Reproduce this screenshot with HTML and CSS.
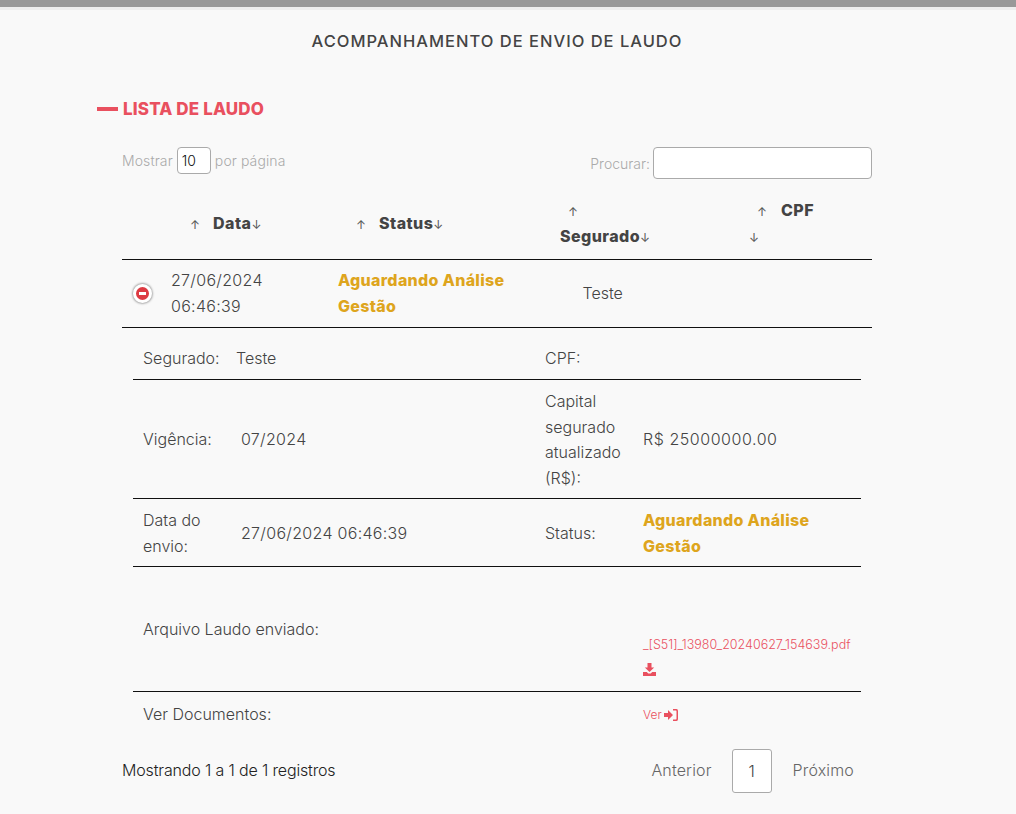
FILE: index.html
```html
<!DOCTYPE html>
<html lang="en">

<head>
    <meta charset="UTF-8">
    <meta name="viewport" content="width=device-width, initial-scale=1.0">
    <title>Acompanhamento de envio de laudo</title>
    <link rel="stylesheet" href="styles.css">
</head>

<body>
    <div class="topbar"></div>
    <h1 class="page-title">ACOMPANHAMENTO DE ENVIO DE LAUDO</h1>

    <div class="content">
        <h2 class="section-title"><span class="dash"></span>LISTA DE LAUDO</h2>

        <div class="list">
            <div class="controls">
                <label class="length">Mostrar <input class="length-input" type="text" value="10"> por página</label>
                <label class="search"><span class="search-label">Procurar:</span> <input class="search-input" type="text"></label>
            </div>

            <table class="laudos">
                <colgroup>
                    <col class="col-toggle">
                    <col class="col-data">
                    <col class="col-status">
                    <col class="col-segurado">
                    <col class="col-cpf">
                </colgroup>
                <thead>
                    <tr>
                        <th></th>
                        <th class="th-data"><span class="arrow up">↑</span>Data<span class="arrow">↓</span></th>
                        <th class="th-status"><span class="arrow up">↑</span>Status<span class="arrow">↓</span></th>
                        <th class="th-segurado"><span class="arrow">↑</span><br>Segurado<span class="arrow">↓</span></th>
                        <th class="th-cpf"><span class="arrow up first">↑</span>CPF<br><span class="arrow">↓</span></th>
                    </tr>
                </thead>
                <tbody>
                    <tr>
                        <td><span class="toggle"></span></td>
                        <td class="nums">27/06/2024 06:46:39</td>
                        <td class="status">Aguardando Análise Gestão</td>
                        <td class="td-segurado">Teste</td>
                        <td></td>
                    </tr>
                </tbody>
            </table>

            <div class="details">
                <div class="row row-first">
                    <div>Segurado:</div>
                    <div>Teste</div>
                    <div>CPF:</div>
                    <div></div>
                </div>
                <div class="row row-capital">
                    <div>Vigência:</div>
                    <div class="nums">07/2024</div>
                    <div>Capital segurado atualizado (R$):</div>
                    <div class="money">R$ 25000000.00</div>
                </div>
                <div class="row row-envio">
                    <div>Data do envio:</div>
                    <div class="nums">27/06/2024 06:46:39</div>
                    <div>Status:</div>
                    <div class="status">Aguardando Análise Gestão</div>
                </div>
                <div class="row row-file">
                    <div>Arquivo Laudo enviado:</div>
                    <div class="file">
                        <a href="#">_[S51]_13980_20240627_154639.pdf</a>
                        <a href="#" class="file-icon">
                            <svg width="13" height="13" viewBox="0 0 13 13"><path fill="#e9505f" d="M4.500 0h4v4.500h2.700L6.500 9 1.800 4.500h2.700zM0 9h3.800l1.500 1.500h2.400L9.200 9H13v4H0z"/></svg>
                        </a>
                    </div>
                </div>
                <div class="row row-docs">
                    <div>Ver Documentos:</div>
                    <div><a href="#" class="ver">Ver
                        <svg width="14" height="12" viewBox="0 0 14 12"><path fill="#e9505f" d="M0 4h4V1l5 5-5 5V8H0zM9 0h3.500Q14 0 14 2v8q0 2-1.500 2H9v-1.500h3q.5 0 .5-.8V2.300q0-.8-.5-.8H9z"/></svg>
                    </a></div>
                </div>
            </div>

            <div class="footer">
                <div class="info">Mostrando 1 a 1 de 1 registros</div>
                <div class="pager">
                    <span>Anterior</span>
                    <span class="page-current">1</span>
                    <span>Próximo</span>
                </div>
            </div>
        </div>
    </div>
</body>

</html>
```

FILE: styles.css
```css
* {
    box-sizing: border-box;
}

body {
    margin: 0;
    background-color: #f9f9f9;
    color: #444;
    font-family: 'Inter', 'Noto Sans', sans-serif;
    font-size: 16px;
    font-weight: 300;
    line-height: 25.600px;
}

.topbar {
    height: 10px;
    background-color: #eee;
    border-top: 7px solid #999;
}

.page-title {
    margin: 20px 0 0 -22px;
    font-size: 16.500px;
    font-weight: 500;
    letter-spacing: 1px;
    line-height: 22px;
    text-align: center;
}

.content {
    padding: 0 144px 0 97px;
}

.section-title {
    display: flex;
    align-items: center;
    margin: 46px 0 0;
    color: #e9505f;
    font-size: 17px;
    font-weight: 800;
    letter-spacing: .15px;
    line-height: 22px;
}

.dash {
    width: 21px;
    height: 4px;
    margin-right: 5px;
    background-color: #e9505f;
}

.list {
    margin-left: 25px;
}

.controls {
    display: flex;
    justify-content: space-between;
    height: 33px;
    margin-top: 26px;
    color: #aaa;
    font-size: 14px;
}

.length {
    margin-top: 1px;
    letter-spacing: .1px;
    line-height: 27px;
}

.length-input {
    width: 34px;
    height: 27px;
    padding: 0 4px;
    border: 1px solid #aaa;
    border-radius: 4px;
    background-color: #fff;
    color: #111;
    font: inherit;
}

.search {
    display: flex;
    align-items: center;
}

.search-label {
    padding-top: 2px;
}

.search-input {
    width: 219px;
    height: 32px;
    margin-left: 3px;
    border: 1px solid #aaa;
    border-radius: 4px;
    background-color: #fff;
}

.laudos {
    width: 100%;
    margin-top: 11px;
    border-collapse: collapse;
    table-layout: fixed;
}

.col-toggle {
    width: 39px;
}

.col-data {
    width: 167px;
}

.col-status {
    width: 222px;
}

.col-segurado {
    width: 189px;
}

.laudos th {
    height: 69px;
    padding: 0;
    border-bottom: 1px solid #111;
    font-weight: 800;
    letter-spacing: .45px;
    text-align: left;
}

.laudos td {
    height: 68px;
    padding: 1px 10px 0;
    border-bottom: 1px solid #111;
}

.laudos th.th-data {
    padding-left: 29px;
}

.laudos th.th-status {
    padding-left: 28px;
}

.laudos th.th-segurado {
    padding-left: 10px;
}

.laudos th.th-cpf {
    padding-left: 10px;
}

.arrow {
    color: #555;
    font-size: 12px;
    font-weight: 400;
}

.up {
    display: inline-block;
    width: 23px;
}

.th-segurado .arrow:first-child {
    margin-left: 8px;
}

.first {
    margin-left: 8px;
    width: 24px;
}

.status {
    color: #dea51d;
    font-weight: 800;
    letter-spacing: .3px;
}

.nums {
    letter-spacing: .3px;
}

.money {
    letter-spacing: .55px;
}

.laudos td.td-segurado {
    padding-top: 2px;
    padding-left: 32.500px;
}

.toggle {
    display: block;
    position: relative;
    width: 19px;
    height: 19px;
    margin-left: 1px;
    border: 3px solid #fff;
    border-radius: 50%;
    background-color: #dd3a42;
    box-shadow: 0 0 2px 1px #aaa;
}

.toggle::after {
    content: '';
    position: absolute;
    top: 5px;
    left: 3px;
    width: 7px;
    height: 3px;
    background-color: #fff;
}

.details {
    width: 728px;
    margin-left: 11px;
}

.row {
    display: grid;
    grid-template-columns: 98px 304px 98px 1fr;
    align-items: center;
    padding: 8px 10px;
    border-bottom: 1px solid #111;
}

.row > div:nth-child(3) {
    padding-right: 8px;
}

.row > div:first-child {
    padding-right: 20px;
}

.row-first {
    grid-template-columns: 93px 309px 98px 1fr;
    padding-top: 18.400px;
}

.row-first > div:first-child {
    padding-right: 0;
    white-space: nowrap;
}

.row-capital {
    padding-top: 8.600px;
    padding-bottom: 7px;
}

.row-envio {
    padding-top: 8.900px;
    padding-bottom: 6.900px;
}

.row-file {
    grid-template-columns: 500px 1fr;
    height: 125px;
    padding-top: 0;
    padding-bottom: 0;
}

.row-file > div:first-child {
    padding-right: 0;
}

.row-docs {
    grid-template-columns: 500px 1fr;
    padding-top: 9.700px;
    border-bottom: 0;
}

.row-docs > div:first-child {
    padding-right: 0;
}

.file {
    display: flex;
    flex-direction: column;
    align-items: flex-start;
    padding-top: 64px;
    padding-bottom: 10px;
}

a {
    color: #e9505f;
    font-size: 12.500px;
    text-decoration: none;
}

.file-icon {
    display: flex;
    align-items: center;
    height: 24px;
}

.ver {
    display: flex;
    align-items: center;
    gap: 2px;
    font-size: 12px;
}

.footer {
    display: flex;
    justify-content: space-between;
    align-items: center;
    margin-top: 13.400px;
    padding-bottom: 20px;
    color: #222;
}

.info {
    letter-spacing: -.15px;
}

.pager {
    display: flex;
    align-items: center;
    gap: 20px;
    margin-right: 18px;
    color: #666;
    letter-spacing: .15px;
}

.page-current {
    width: 40px;
    height: 44px;
    margin-right: 1px;
    border: 1px solid #aaa;
    border-radius: 3px;
    background-color: #fff;
    color: #444;
    line-height: 42px;
    text-align: center;
}
```
